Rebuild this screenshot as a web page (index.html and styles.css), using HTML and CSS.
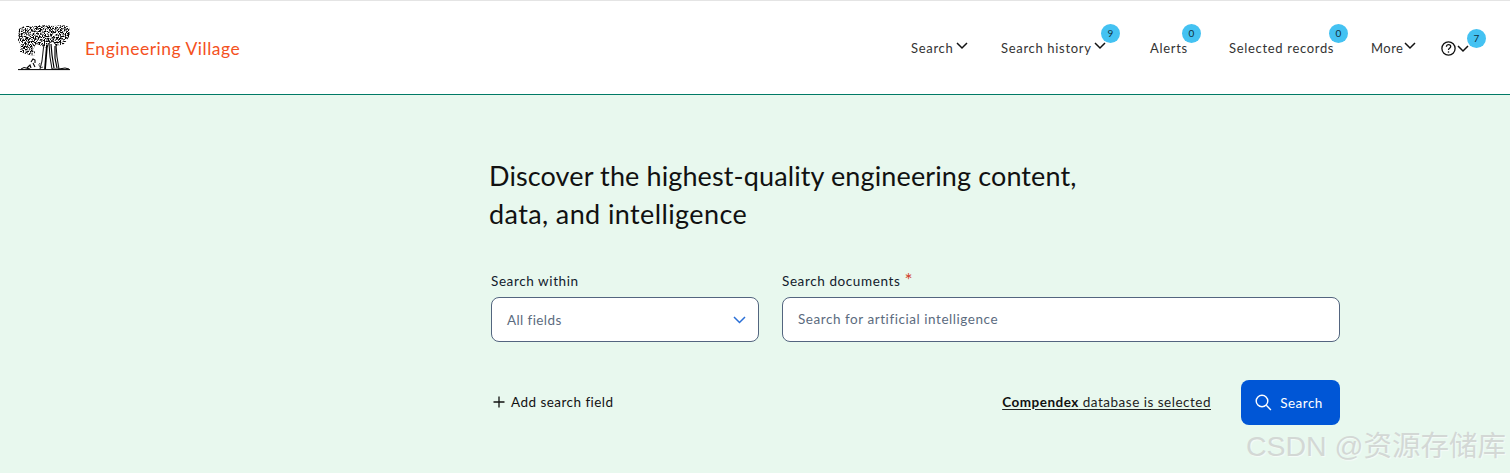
FILE: index.html
```html
<!DOCTYPE html>
<html lang="en">
<head>
<meta charset="utf-8">
<title>Engineering Village</title>
<link rel="stylesheet" href="styles.css">
</head>
<body>
<header class="topbar">
  <a class="brand" href="#">
    <svg class="logo" width="52" height="46" viewBox="0 0 52 46" aria-hidden="true">
      <defs>
        <filter id="leaf" x="0" y="0" width="100%" height="100%" color-interpolation-filters="sRGB">
          <feTurbulence type="fractalNoise" baseFrequency="0.8" numOctaves="2" seed="11" result="n"/>
          <feColorMatrix in="n" type="matrix" values="0 0 0 0 0  0 0 0 0 0  0 0 0 0 0  4 4 0 0 -3.550" result="m"/>
          <feComposite in="m" in2="SourceAlpha" operator="in"/>
        </filter>
      </defs>
      <path filter="url(#leaf)" d="M1 4 L6 1 L17 1 L24 0 L36 1 L45 0 L51 2 L52 10 L49 15 L46 19 L38 21 L32 18 L29 23 L24 21 L18 19 L15 25 L17 27 L16 31 L8 29 L2 27 L3 21 L0 15 Z"/>
      <path d="M26 19 L25 27 L24 36 L22 44" fill="none" stroke="#222" stroke-width="1.100"/>
      <path d="M29 20 L28 32 L27 44" fill="none" stroke="#000" stroke-width="1.800"/>
      <path d="M31 18 L35 16 L38 20 L39 32 L41 44 L34 44 L32 32 Z" fill="#fff" stroke="#000" stroke-width="1"/>
      <path d="M33 19 L34 30 L36 43 M37 21 L37 33 L39 43" fill="none" stroke="#000" stroke-width="1.200"/>
      <path d="M13 37 l2 -3 l2 1 l0 3 M15 38 l2 4 M9 43 l3 -3 l1 3" fill="none" stroke="#000" stroke-width="1.100"/>
      <path d="M22 38 a2.500 2.500 0 1 0 3 4" fill="none" stroke="#222" stroke-width=".8"/>
      <path d="M0 44.600 H52" stroke="#000" stroke-width="1"/>
      <path d="M3 44 l3 -1.500 l6 1.500 M41 44 l6 -1 l4 1" fill="none" stroke="#000" stroke-width="1"/>
    </svg>
    <span class="brand-name">Engineering Village</span>
  </a>
  <nav class="nav">
    <a class="nav-item nav-search" href="#">Search<svg class="chev chev-search" width="12" height="8" viewBox="0 0 12 8"><path d="M1 1l5 5 5-5"/></svg></a>
    <a class="nav-item nav-history" href="#">Search history<svg class="chev" width="12" height="8" viewBox="0 0 12 8"><path d="M1 1l5 5 5-5"/></svg><span class="badge">9</span></a>
    <a class="nav-item nav-alerts" href="#">Alerts<span class="badge">0</span></a>
    <a class="nav-item nav-selected" href="#">Selected records<span class="badge">0</span></a>
    <a class="nav-item nav-more" href="#"><span class="more-label">More</span><svg class="chev chev-more" width="12" height="8" viewBox="0 0 12 8"><path d="M1 1l5 5 5-5"/></svg></a>
    <a class="nav-item nav-help" href="#" aria-label="Help">
      <svg class="help" width="15" height="15" viewBox="0 0 15 15"><circle cx="7.5" cy="7.5" r="6.6"/><path d="M5.4 5.8c0-1.3 1-2.100 2.200-2.100s2.100.8 2.100 1.900c0 1.700-2.200 1.600-2.200 3.300"/><circle class="dot" cx="7.5" cy="11" r=".8"/></svg><svg class="chev chev-help" width="12" height="8" viewBox="0 0 12 8"><path d="M1 1l5 5 5-5"/></svg><span class="badge badge-help">7</span>
    </a>
  </nav>
</header>
<main class="hero">
  <h1 class="headline">Discover the highest-quality engineering content,<br><span class="headline-second">data, and intelligence</span></h1>
  <form class="search-form">
    <div class="fields">
      <div class="field field-within">
        <label class="label">Search within</label>
        <div class="control select"><span>All fields</span>
          <svg class="select-chev" width="13" height="8" viewBox="0 0 13 8"><path d="M1 1l5.500 5.500L12 1"/></svg>
        </div>
      </div>
      <div class="field field-docs">
        <label class="label">Search documents <span class="req">*</span></label>
        <div class="control input"><span class="placeholder">Search for artificial intelligence</span></div>
      </div>
    </div>
    <div class="actions">
      <a class="add" href="#"><svg class="plus" width="12" height="12" viewBox="0 0 12 12"><path d="M6 .5v11M.5 6h11"/></svg>Add search field</a>
      <div class="submit-group">
        <a class="db-link" href="#"><b>Compendex</b> database is selected</a>
        <button class="btn" type="button"><svg class="btn-icon" width="17" height="17" viewBox="0 0 17 17"><circle cx="7" cy="7" r="5.800"/><path d="M11.300 11.300l4.600 4.600"/></svg>Search</button>
      </div>
    </div>
  </form>
</main>
<div class="watermark">CSDN @资源存储库</div>
</body>
</html>
```
FILE: styles.css
```css
* { box-sizing: border-box; }
html, body { margin: 0; height: 100%; overflow: hidden; }
body { background: #e8f8ee; font-family: Lato, "Noto Sans", sans-serif; color: #1a1a1a; position: relative; }
a { color: inherit; text-decoration: none; }

.topbar { height: 95px; background: #fff; border-top: 1px solid #e4e4e4; border-bottom: 1px solid #007a66; display: flex; align-items: flex-start; justify-content: space-between; padding-left: 18px; }
.brand { display: flex; align-items: flex-start; padding-top: 24px; }
.logo { display: block; }
.brand-name { margin: 13px 0 0 15px; font-size: 17.5px; line-height: 22px; color: #f4511e; letter-spacing: .5px; }

.nav { display: flex; font-size: 13px; line-height: 16px; letter-spacing: .68px; color: #333; padding-top: 39px; margin-right: 41px; }
.nav-item { position: relative; display: flex; align-items: flex-start; white-space: nowrap; }
.nav-search { width: 58px; margin-right: 32px; }
.nav-history { width: 105px; margin-right: 44px; }
.nav-alerts { width: 37px; margin-right: 42px; }
.nav-selected { width: 105px; margin-right: 37px; }
.nav-more { width: 46px; margin-right: 24px; }
.nav-help { width: 28px; }
.more-label { letter-spacing: .45px; }
.chev { display: block; margin: 2px 0 0 2px; fill: none; stroke: #111; stroke-width: 1.5; flex: none; }
.chev-search { margin-left: 3px; }
.chev-more { margin-left: 1px; }
.chev-help { margin: 5px 0 0 1px; }
.help { display: block; flex: none; margin-top: 1px; fill: none; stroke: #111; stroke-width: 1.3; }
.help .dot { fill: #111; stroke: none; }
.badge { position: absolute; top: -16px; right: -14px; width: 19px; height: 19px; border-radius: 50%; background: #44c2f2; color: #12303f; font-size: 10px; line-height: 19px; letter-spacing: 0; text-align: center; }
.badge-help { top: -11px; right: -17px; }

.hero { padding: 62px 0 0 489px; }
.headline { margin: 0; font-size: 27px; font-weight: 400; line-height: 38px; color: #111; letter-spacing: .12px; }
.headline-second { letter-spacing: .39px; }

.search-form { width: 849px; margin: 40px 0 0 2px; }
.fields { display: flex; gap: 23px; }
.field-within { width: 268px; flex: none; }
.field-docs { flex: 1; }
.label { display: block; height: 16px; font-size: 13.5px; line-height: 16px; letter-spacing: .6px; color: #12202c; margin-bottom: 8px; }
.req { color: #d2402b; font-size: 19px; line-height: 14px; vertical-align: top; }
.control { height: 45px; background: #fff; border: 1px solid #53657f; border-radius: 8px; display: flex; align-items: center; justify-content: space-between; padding: 0 12px 0 15px; font-size: 13.5px; letter-spacing: .4px; color: #5b6b7e; }
.placeholder { letter-spacing: .55px; margin-top: -2px; }
.select-chev { fill: none; stroke: #2a6fd6; stroke-width: 1.5; }

.actions { display: flex; justify-content: space-between; align-items: center; margin-top: 38px; }
.add { display: flex; align-items: center; gap: 6px; margin: -2px 0 0 2px; font-size: 13.5px; letter-spacing: .46px; color: #111; }
.plus { fill: none; stroke: #111; stroke-width: 1.3; }
.submit-group { display: flex; align-items: center; gap: 30px; }
.db-link { font-size: 13.5px; letter-spacing: .5px; margin-top: -2px; color: #222; text-decoration: underline; text-underline-offset: 2px; }
.db-link b { color: #111; }
.btn { width: 99px; height: 45px; border: 0; border-radius: 8px; background: #0056d6; color: #fff; display: flex; align-items: center; justify-content: center; gap: 8px; font: inherit; font-size: 13.5px; letter-spacing: .5px; padding: 0 3px 0 0; }
.btn-icon { fill: none; stroke: #fff; stroke-width: 1.4; }

.watermark { position: absolute; right: 4px; top: 429px; font-family: "Liberation Sans", "Noto Sans CJK SC", sans-serif; font-size: 28.5px; line-height: 34px; color: #d3d8d5; text-shadow: 1px 1px 1px #f6fbf8; white-space: nowrap; }
```
